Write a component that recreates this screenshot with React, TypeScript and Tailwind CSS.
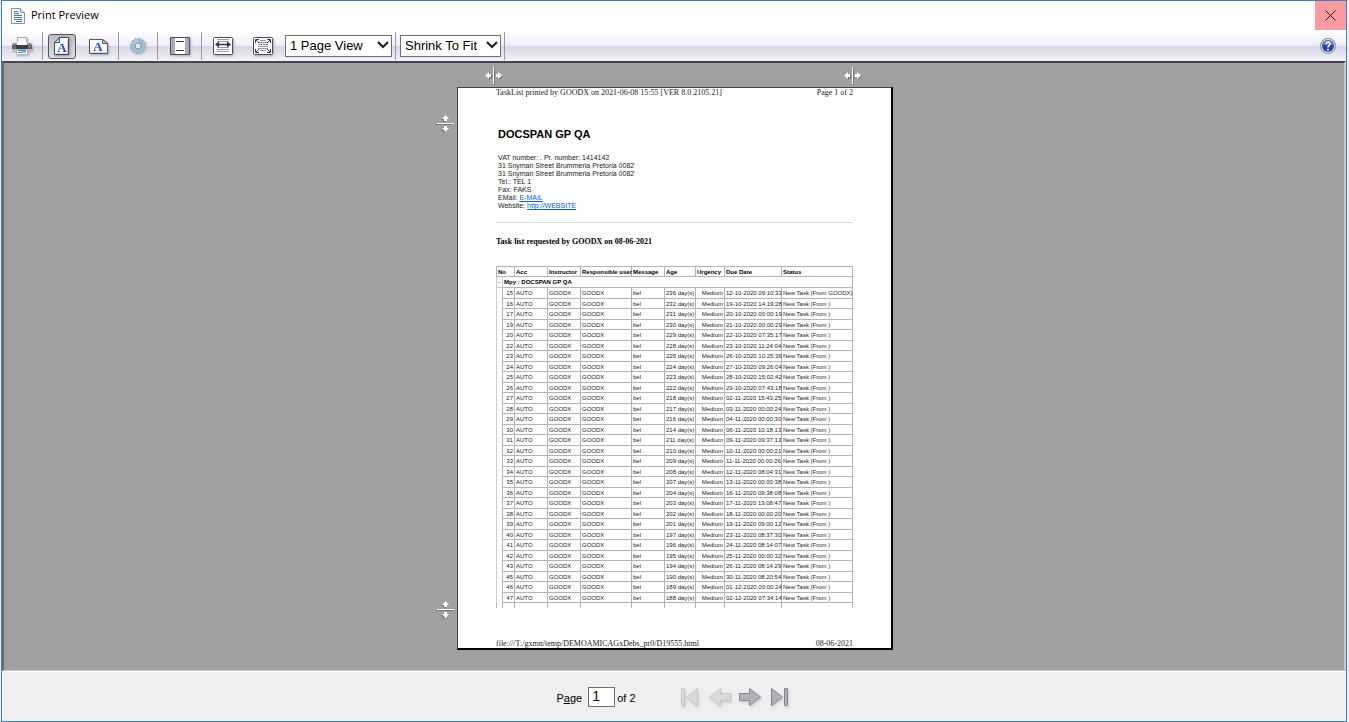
import React from "react";

const tasks = [
  ["15", "236", "12-10-2020 09:10:33", "GOODX"],
  ["16", "232", "19-10-2020 14:19:28", " "],
  ["17", "231", "20-10-2020 00:00:19", " "],
  ["19", "230", "21-10-2020 00:00:29", " "],
  ["20", "229", "22-10-2020 07:35:17", " "],
  ["22", "228", "23-10-2020 11:24:04", " "],
  ["23", "225", "26-10-2020 10:25:36", " "],
  ["24", "224", "27-10-2020 09:26:04", " "],
  ["25", "223", "28-10-2020 15:02:42", " "],
  ["26", "222", "29-10-2020 07:43:18", " "],
  ["27", "218", "02-11-2020 15:43:25", " "],
  ["28", "217", "03-11-2020 00:00:24", " "],
  ["29", "216", "04-11-2020 00:00:30", " "],
  ["30", "214", "06-11-2020 10:18:13", " "],
  ["31", "211", "09-11-2020 09:37:13", " "],
  ["32", "210", "10-11-2020 00:00:21", " "],
  ["33", "209", "11-11-2020 00:00:26", " "],
  ["34", "208", "12-11-2020 08:04:31", " "],
  ["35", "207", "13-11-2020 00:00:38", " "],
  ["36", "204", "16-11-2020 09:38:08", " "],
  ["37", "203", "17-11-2020 13:08:47", " "],
  ["38", "202", "18-11-2020 00:00:20", " "],
  ["39", "201", "19-11-2020 09:00:12", " "],
  ["40", "197", "23-11-2020 08:37:30", " "],
  ["41", "196", "24-11-2020 08:14:07", " "],
  ["42", "195", "25-11-2020 00:00:32", " "],
  ["43", "194", "26-11-2020 08:14:29", " "],
  ["45", "190", "30-11-2020 08:20:54", " "],
  ["46", "189", "01-12-2020 00:00:24", " "],
  ["47", "188", "02-12-2020 07:34:14", " "],
];

const headings = [
  "Acc",
  "Instructor",
  "Responsible user",
  "Message",
  "Age",
  "Urgency",
  "Due Date",
  "Status",
];

const ToolButton = ({
  label,
  active = false,
  disabled = false,
  className = "",
  children,
}: {
  label: string;
  active?: boolean;
  disabled?: boolean;
  className?: string;
  children: React.ReactNode;
}) => (
  <button
    type="button"
    aria-label={label}
    disabled={disabled}
    className={`flex h-[25px] w-7 shrink-0 items-center justify-center ${
      active
        ? "rounded-[3px] border border-[#555] bg-gradient-to-b from-[#bdbdbd] to-[#dfdde3]"
        : ""
    } ${className}`}
  >
    {children}
  </button>
);

const Separator = ({ className = "" }: { className?: string }) => (
  <div className={`h-7 w-px shrink-0 bg-[#9a99a8] ${className}`} />
);

const PrinterIcon = () => (
  <svg width="20" height="20" viewBox="0 0 20 20" className="drop-shadow-[1px_1px_1px_#aaa]">
    <path d="M5.500 1.500h9v6h-9z" fill="#fafafa" stroke="#a5a5a5" />
    <path d="M1 7h18l1 2v6H0V9z" fill="#8d928f" />
    <path d="M5 6h10v3H5z" fill="#fdfdfd" />
    <path d="M0 9h20v4H0z" fill="#5f6462" />
    <path d="M4 9h12v4H4z" fill="#3a3e3c" />
    <path d="M0 13h20v2H0z" fill="#b9bcb9" />
    <path d="M4.500 13.500h11v5h-11z" fill="#fff" stroke="#b4b9bd" />
    <path d="M6 14h8v1H6zM6 16h5v1H6z" fill="#3d86bd" />
    <path d="M10 15h4v2h-4z" fill="#7cc3e2" />
    <path d="M17 10h1v1h-1z" fill="#9fe07a" />
  </svg>
);

const PortraitIcon = () => (
  <svg width="18" height="20" viewBox="0 0 18 20" className="drop-shadow-[1px_1px_1px_#888]">
    <path d="M6.500 1.500H15.500V18.500H1.500V6.500z" fill="#fbfbff" stroke="#4a4a5e" />
    <path d="M6.500 1.500V6.500H1.500z" fill="#d5d5e2" stroke="#4a4a5e" />
    <path d="M3 17.500H14.500V4" fill="none" stroke="#cfd0e4" />
    <text x="9" y="16" textAnchor="middle" fontSize="13" fontWeight="bold" fill="#2346c0" fontFamily="Liberation Serif, serif">A</text>
  </svg>
);

const LandscapeIcon = () => (
  <svg width="21" height="18" viewBox="0 0 21 18" className="drop-shadow-[1px_1px_1px_#aaa]">
    <path d="M1.500 2.500H14.500L19.500 6.500V16.500H1.500z" fill="#fbfbff" stroke="#55556a" />
    <path d="M14.500 2.500V6.500H19.500z" fill="#d4d4e2" stroke="#55556a" />
    <path d="M3 15.500H18.500" fill="none" stroke="#cfd0e4" />
    <text x="10" y="14" textAnchor="middle" fontSize="13" fontWeight="bold" fill="#2346c0" fontFamily="Liberation Serif, serif">A</text>
  </svg>
);

const GearIcon = () => (
  <svg width="18" height="18" viewBox="0 0 18 18" className="drop-shadow-[1px_1px_1px_#bbb]">
    <circle cx="9" cy="9" r="7" fill="none" stroke="#86a9c2" strokeWidth="2" strokeDasharray="2.200 1.465" />
    <circle cx="9" cy="9" r="5" fill="none" stroke="#9dbfd6" strokeWidth="4" />
    <circle cx="9" cy="9" r="3" fill="#e6e6f0" stroke="#7297b3" />
    <path d="M4.500 7A5 5 0 0 1 9 4" fill="none" stroke="#d4e8f3" />
  </svg>
);

const MarginsIcon = () => (
  <svg width="22" height="20" viewBox="0 0 22 20" className="drop-shadow-[1px_1px_1px_#aaa]">
    <rect x="1" y="1" width="20" height="18" rx="1" fill="#4f4f64" />
    <path d="M2 2h18v16H2z" fill="#a9a9bb" />
    <path d="M6 2h10v16H6z" fill="#fff" />
    <path d="M7 5.500h8M7 14.500h8" stroke="#33334a" />
  </svg>
);

const FullWidthIcon = () => (
  <svg width="22" height="20" viewBox="0 0 22 20" className="drop-shadow-[1px_1px_1px_#aaa]">
    <rect x="1.500" y="1.500" width="19" height="17" rx="1" fill="#fff" stroke="#4f4f64" />
    <path d="M5 3.500h12M5 5.500h12M5 11.500h12M5 13.500h12M5 15.500h12" stroke="#9c9cae" />
    <path d="M4 8.500h14" stroke="#33334a" strokeWidth="1.500" />
    <path d="M3 8.500l4-3v6zM19 8.500l-4-3v6z" fill="#33334a" />
  </svg>
);

const FullPageIcon = () => (
  <svg width="22" height="20" viewBox="0 0 22 20" className="drop-shadow-[1px_1px_1px_#aaa]">
    <rect x="1.500" y="1.500" width="19" height="17" rx="1" fill="#fff" stroke="#4f4f64" />
    <path d="M8 4.500h6M6 6.500h10M6 8.500h10M6 10.500h10M6 12.500h10M8 14.500h6" stroke="#9494a6" />
    <path d="M3.500 7V3.500H7M15 3.500h3.500V7M18.500 13v3.500H15M7 16.500H3.500V13M4 4l3 3M18 4l-3 3M18 16l-3-3M4 16l3-3" fill="none" stroke="#33334a" />
  </svg>
);

const HelpIcon = () => (
  <svg width="18" height="18" viewBox="0 0 18 18">
    <circle cx="9" cy="9" r="8" fill="#8d8d96" />
    <circle cx="9" cy="9" r="7" fill="#e9e9ef" />
    <circle cx="9" cy="9" r="6" fill="#2447a8" />
    <path d="M4 8a5 5 0 0 1 10 0z" fill="#5c7dcc" />
    <path d="M7 7.200C7 4.400 11.300 4.500 11 7.200C10.800 8.500 9 8.500 9 10.500" fill="none" stroke="#fff" strokeWidth="1.600" />
    <circle cx="9" cy="12.700" r="1" fill="#fff" />
  </svg>
);

const DocumentIcon = () => (
  <svg width="14" height="16" viewBox="0 0 14 16">
    <path d="M.500 .500H9.500L13.500 4.500V15.500H.500z" fill="#fcfdfc" stroke="#8c9494" />
    <path d="M9.500 .500V4.500H13.500" fill="#e4e8e8" stroke="#8c9494" />
    <path d="M3 3.500h4M3 5.500h5M3 7.500h8M3 9.500h8M3 11.500h8M5 13.500h6" stroke="#2f7f95" />
  </svg>
);

const ToolSelect = ({
  label,
  value,
  className,
}: {
  label: string;
  value: string;
  className: string;
}) => (
  <div className={`relative shrink-0 ${className}`}>
    <select
      aria-label={label}
      className="block h-[22px] w-full appearance-none border border-[#707070] bg-white pl-1 text-[13px] leading-5 text-black"
    >
      <option>{value}</option>
    </select>
    <svg
      width="14"
      height="10"
      viewBox="0 0 14 10"
      className="pointer-events-none absolute top-[5px] right-[2px]"
    >
      <path d="M2 2l5 5 5-5" fill="none" stroke="#222" strokeWidth="2.200" />
    </svg>
  </div>
);

const MarginHandle = ({
  label,
  vertical = false,
}: {
  label: string;
  vertical?: boolean;
}) => (
  <button type="button" aria-label={label} className="h-[17px] w-[17px]">
    <svg
      width="17"
      height="17"
      viewBox="0 0 17 17"
      className={`drop-shadow-[1px_1px_0_#777] ${vertical ? "rotate-90" : ""}`}
    >
      <path d="M8 0h1v17H8z" fill="#fff" />
      <path d="M0 8.500L4 5v2h2v3H4v2zM17 8.500L13 5v2h-2v3h2v2z" fill="#fff" />
    </svg>
  </button>
);

const TaskTable = () => (
  <table className="mt-[19px] w-full table-fixed border-collapse text-[6px] leading-[8px] whitespace-nowrap text-[#222] [&_td]:p-0 [&_td]:px-px [&_th]:p-0 [&_th]:px-px">
    <colgroup>
      <col className="w-[6px]" />
      <col className="w-[12px]" />
      <col className="w-[33px]" />
      <col className="w-[33px]" />
      <col className="w-[51px]" />
      <col className="w-[33px]" />
      <col className="w-[31px]" />
      <col className="w-[29px]" />
      <col className="w-[57px]" />
      <col />
    </colgroup>
    <thead>
      <tr className="h-[10px] text-left text-black [&>th]:border [&>th]:border-[#b4b4b4]">
        <th colSpan={2}>No</th>
        {headings.map((heading) => (
          <th key={heading}>{heading}</th>
        ))}
      </tr>
    </thead>
    <tbody>
      <tr className="h-[11px] font-bold text-black">
        <td className="border border-[#c8c8c8] font-normal">-</td>
        <td colSpan={9} className="border border-[#b4b4b4]">
          Mpy : DOCSPAN GP QA
        </td>
      </tr>
      {tasks.map(([no, age, due, from]) => (
        <tr
          key={no}
          className="odd:h-[10px] even:h-[11px] [&>td+td]:border [&>td+td]:border-[#b4b4b4]"
        >
          <td className="border-l border-[#d0d0d0]"></td>
          <td className="text-right">{no}</td>
          <td>AUTO</td>
          <td>GOODX</td>
          <td>GOODX</td>
          <td>bel</td>
          <td className="text-right">{age} day(s)</td>
          <td className="text-right">Medium</td>
          <td>{due}</td>
          <td>New Task (From {from.trim()})</td>
        </tr>
      ))}
      {/* next row is cut off by the page break */}
      <tr className="h-[5px] [&>td]:border-x [&>td]:border-[#b4b4b4]">
        <td></td>
        <td></td>
        <td></td>
        <td></td>
        <td></td>
        <td></td>
        <td></td>
        <td></td>
        <td></td>
        <td></td>
      </tr>
    </tbody>
  </table>
);

const Paper = () => (
  <article className="flex min-h-[563px] flex-col border-t border-r-2 border-b-2 border-l border-t-[#444] border-r-black border-b-black border-l-[#444] bg-white px-[38px]">
    <div className="flex justify-between font-['Liberation_Serif',serif] text-[8px] leading-[9px] text-[#222]">
      <span>TaskList printed by GOODX on 2021-06-08 15:55 [VER 8.0.2105.21]</span>
      <span>Page 1 of 2</span>
    </div>
    <h1 className="mt-[31px] pl-[2px] text-[11px] leading-3 font-bold text-black">
      DOCSPAN GP QA
    </h1>
    <address className="mt-[14px] pl-[2px] text-[7px] leading-[8px] text-[#222] not-italic">
      <p>VAT number: . Pr. number: 1414142</p>
      <p>31 Snyman Street Brummeria Pretoria 0082</p>
      <p>31 Snyman Street Brummeria Pretoria 0082</p>
      <p>Tel.: TEL 1</p>
      <p>Fax: FAKS</p>
      <p>
        EMail: <a href="#email" className="text-[#0066cc] underline">E-MAIL</a>
      </p>
      <p>
        Website: <a href="#website" className="text-[#0066cc] underline">http://WEBSITE</a>
      </p>
    </address>
    <hr className="mt-3 border-[#d9d9d9]" />
    <h2 className="mt-[14px] font-['Liberation_Serif',serif] text-[8px] leading-[10px] font-bold text-black">
      Task list requested by GOODX on 08-06-2021
    </h2>
    <TaskTable />
    <div className="mt-auto flex justify-between font-['Liberation_Serif',serif] text-[8px] leading-[9px] text-[#222]">
      <span>file:///T:/gxmn/temp/DEMOAMICAGxDebs_pr0/D19555.html</span>
      <span>08-06-2021</span>
    </div>
  </article>
);

const NavButton = ({
  label,
  disabled = false,
  d,
}: {
  label: string;
  disabled?: boolean;
  d: string;
}) => (
  <button type="button" aria-label={label} disabled={disabled}>
    <svg
      width="24"
      height="22"
      viewBox="0 0 24 22"
      className="drop-shadow-[1px_2px_1px_#cfcfcf]"
    >
      <path
        d={d}
        fill={disabled ? "#dadada" : "#b2b2b4"}
        stroke={disabled ? "#cdc2d3" : "#8a819a"}
      />
    </svg>
  </button>
);

const App = () => {
  return (
    <div className="flex min-h-screen bg-[#eaf1f8] pr-[2px] pb-px pl-px font-['Liberation_Sans',Arial,sans-serif]">
      <div className="flex flex-1 flex-col border border-[#3f7fb5] bg-white">
        <header className="flex h-[30px] items-start">
          <div className="flex h-[29px] flex-1 items-center gap-[6px] pl-[9px]">
            <DocumentIcon />
            <h1 className="font-['Open_Sans',sans-serif] text-[11px] text-black">
              Print Preview
            </h1>
          </div>
          <button
            type="button"
            aria-label="Close"
            className="flex h-[29px] w-[31px] items-center justify-center bg-[#f99ba0]"
          >
            <svg width="11" height="11" viewBox="0 0 11 11">
              <path d="M.500 .500l10 10M10.500 .500l-10 10" stroke="#111" />
            </svg>
          </button>
        </header>

        <div className="flex h-[30px] items-center bg-[linear-gradient(to_bottom,#ffffff_0%,#eeecf8_50%,#d6d5e3_50%,#f4f2fc_100%)] pl-[6px]">
          <ToolButton label="Print">
            <PrinterIcon />
          </ToolButton>
          <Separator className="ml-[6px]" />
          <ToolButton label="Portrait" active className="ml-[5px]">
            <PortraitIcon />
          </ToolButton>
          <ToolButton label="Landscape" className="ml-2">
            <LandscapeIcon />
          </ToolButton>
          <Separator className="ml-[6px]" />
          <ToolButton label="Page setup" className="ml-[5px]">
            <GearIcon />
          </ToolButton>
          <Separator className="ml-[5px]" />
          <ToolButton label="Headers and footers" className="ml-2">
            <MarginsIcon />
          </ToolButton>
          <Separator className="ml-[7px]" />
          <ToolButton label="View full width" className="ml-[7px]">
            <FullWidthIcon />
          </ToolButton>
          <ToolButton label="View full page" className="ml-3">
            <FullPageIcon />
          </ToolButton>
          <ToolSelect label="Page view" value="1 Page View" className="ml-2 w-[107px]" />
          <Separator className="ml-[3px]" />
          <ToolSelect label="Print size" value="Shrink To Fit" className="ml-1 w-[101px]" />
          <Separator className="ml-[3px]" />
          <button type="button" aria-label="Help" className="mr-[9px] ml-auto">
            <HelpIcon />
          </button>
        </div>

        <main className="flex flex-1 justify-center border-t-2 border-r-2 border-b border-l-2 border-t-[#43454f] border-r-[#c6c6c6] border-b-[#c6c6c6] border-l-[#6a6a6a] bg-[#a0a0a0] pt-1 pb-5 pl-[2px]">
          <div className="grid grid-cols-[17px_436px_17px] grid-rows-[17px_1fr] gap-x-[3px] gap-y-[3px]">
            <div className="col-start-2 flex justify-between pr-8 pl-7">
              <MarginHandle label="Left margin" />
              <MarginHandle label="Right margin" />
            </div>
            <div className="col-start-1 row-start-2 flex flex-col justify-between pt-7 pb-8">
              <MarginHandle label="Top margin" vertical />
              <MarginHandle label="Bottom margin" vertical />
            </div>
            <div className="col-start-2 row-start-2">
              <Paper />
            </div>
          </div>
        </main>

        <footer className="flex h-[50px] items-center justify-center border-t border-white bg-[#efefef]">
          <div className="flex items-center text-[11px] text-black">
            <label htmlFor="page" className="pt-[3px]">
              P<span className="underline">a</span>ge
            </label>
            <input
              id="page"
              type="text"
              defaultValue="1"
              className="mr-[2px] ml-[6px] h-5 w-[27px] border border-[#707070] bg-white pl-[3px] text-[14px]"
            />
            <span className="pt-[3px]">of 2</span>
          </div>
          <div className="ml-[42px] flex gap-[6px]">
            <NavButton label="First page" disabled d="M3.500 2.500h3v17h-3zM19.500 2.500v17L8.500 11z" />
            <NavButton label="Previous page" disabled d="M1.500 11L12.500 2.500V7.500H22.500V14.500H12.500V19.500z" />
            <NavButton label="Next page" d="M22.500 11L11.500 2.500V7.500H1.500V14.500H11.500V19.500z" />
            <NavButton label="Last page" d="M3.500 2.500L14.500 11L3.500 19.500zM16.500 2.500h3v17h-3z" />
          </div>
        </footer>
      </div>
    </div>
  );
};

export default App;
